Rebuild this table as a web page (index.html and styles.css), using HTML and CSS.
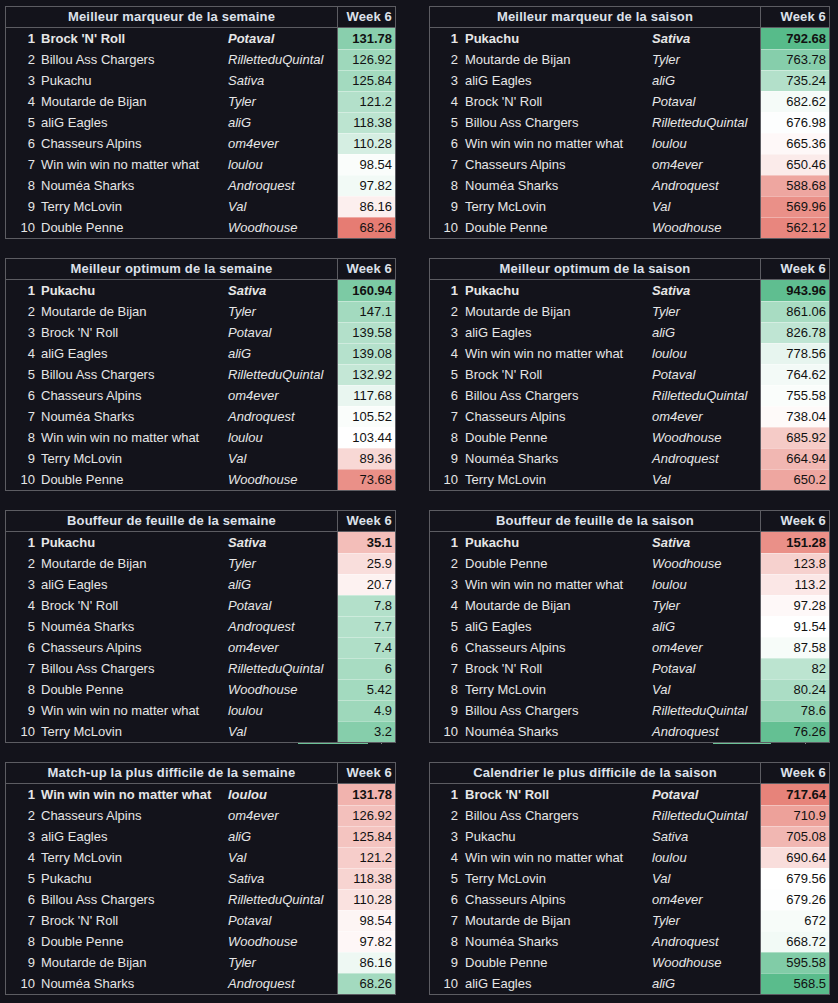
FILE: index.html
```html
<!DOCTYPE html>
<html lang="fr">
<head>
<meta charset="utf-8">
<title>Classements Week 6</title>
<link rel="stylesheet" href="styles.css">
</head>
<body>
<div class="board">

<!-- Row 1 -->
<div class="t">
  <div class="hd"><div class="ttl">Meilleur marqueur de la semaine</div><div class="wk">Week 6</div></div>
  <div class="row r1"><div class="rk">1</div><div class="nm">Brock 'N' Roll</div><div class="ow">Potaval</div><div class="v g" style="--p:70%">131.78</div></div>
  <div class="row"><div class="rk">2</div><div class="nm">Billou Ass Chargers</div><div class="ow">RilletteduQuintal</div><div class="v g" style="--p:58%">126.92</div></div>
  <div class="row"><div class="rk">3</div><div class="nm">Pukachu</div><div class="ow">Sativa</div><div class="v g" style="--p:55%">125.84</div></div>
  <div class="row"><div class="rk">4</div><div class="nm">Moutarde de Bijan</div><div class="ow">Tyler</div><div class="v g" style="--p:45%">121.2</div></div>
  <div class="row"><div class="rk">5</div><div class="nm">aliG Eagles</div><div class="ow">aliG</div><div class="v g" style="--p:40%">118.38</div></div>
  <div class="row"><div class="rk">6</div><div class="nm">Chasseurs Alpins</div><div class="ow">om4ever</div><div class="v g" style="--p:25%">110.28</div></div>
  <div class="row"><div class="rk">7</div><div class="nm">Win win win no matter what</div><div class="ow">loulou</div><div class="v g" style="--p:3%">98.54</div></div>
  <div class="row"><div class="rk">8</div><div class="nm">Nouméa Sharks</div><div class="ow">Androquest</div><div class="v g" style="--p:8%">97.82</div></div>
  <div class="row"><div class="rk">9</div><div class="nm">Terry McLovin</div><div class="ow">Val</div><div class="v r" style="--p:12%">86.16</div></div>
  <div class="row"><div class="rk">10</div><div class="nm">Double Penne</div><div class="ow">Woodhouse</div><div class="v r" style="--p:100%">68.26</div></div>
</div>

<div class="t wide">
  <div class="hd"><div class="ttl">Meilleur marqueur de la saison</div><div class="wk">Week 6</div></div>
  <div class="row r1"><div class="rk">1</div><div class="nm">Pukachu</div><div class="ow">Sativa</div><div class="v g" style="--p:100%">792.68</div></div>
  <div class="row"><div class="rk">2</div><div class="nm">Moutarde de Bijan</div><div class="ow">Tyler</div><div class="v g" style="--p:72%">763.78</div></div>
  <div class="row"><div class="rk">3</div><div class="nm">aliG Eagles</div><div class="ow">aliG</div><div class="v g" style="--p:45%">735.24</div></div>
  <div class="row"><div class="rk">4</div><div class="nm">Brock 'N' Roll</div><div class="ow">Potaval</div><div class="v g" style="--p:6%">682.62</div></div>
  <div class="row"><div class="rk">5</div><div class="nm">Billou Ass Chargers</div><div class="ow">RilletteduQuintal</div><div class="v g" style="--p:1%">676.98</div></div>
  <div class="row"><div class="rk">6</div><div class="nm">Win win win no matter what</div><div class="ow">loulou</div><div class="v r" style="--p:5%">665.36</div></div>
  <div class="row"><div class="rk">7</div><div class="nm">Chasseurs Alpins</div><div class="ow">om4ever</div><div class="v r" style="--p:15%">650.46</div></div>
  <div class="row"><div class="rk">8</div><div class="nm">Nouméa Sharks</div><div class="ow">Androquest</div><div class="v r" style="--p:68%">588.68</div></div>
  <div class="row"><div class="rk">9</div><div class="nm">Terry McLovin</div><div class="ow">Val</div><div class="v r" style="--p:85%">569.96</div></div>
  <div class="row"><div class="rk">10</div><div class="nm">Double Penne</div><div class="ow">Woodhouse</div><div class="v r" style="--p:92%">562.12</div></div>
</div>

<!-- Row 2 -->
<div class="t">
  <div class="hd"><div class="ttl">Meilleur optimum de la semaine</div><div class="wk">Week 6</div></div>
  <div class="row r1"><div class="rk">1</div><div class="nm">Pukachu</div><div class="ow">Sativa</div><div class="v g" style="--p:78%">160.94</div></div>
  <div class="row"><div class="rk">2</div><div class="nm">Moutarde de Bijan</div><div class="ow">Tyler</div><div class="v g" style="--p:55%">147.1</div></div>
  <div class="row"><div class="rk">3</div><div class="nm">Brock 'N' Roll</div><div class="ow">Potaval</div><div class="v g" style="--p:45%">139.58</div></div>
  <div class="row"><div class="rk">4</div><div class="nm">aliG Eagles</div><div class="ow">aliG</div><div class="v g" style="--p:44%">139.08</div></div>
  <div class="row"><div class="rk">5</div><div class="nm">Billou Ass Chargers</div><div class="ow">RilletteduQuintal</div><div class="v g" style="--p:35%">132.92</div></div>
  <div class="row"><div class="rk">6</div><div class="nm">Chasseurs Alpins</div><div class="ow">om4ever</div><div class="v g" style="--p:13%">117.68</div></div>
  <div class="row"><div class="rk">7</div><div class="nm">Nouméa Sharks</div><div class="ow">Androquest</div><div class="v g" style="--p:3%">105.52</div></div>
  <div class="row"><div class="rk">8</div><div class="nm">Win win win no matter what</div><div class="ow">loulou</div><div class="v g" style="--p:0%">103.44</div></div>
  <div class="row"><div class="rk">9</div><div class="nm">Terry McLovin</div><div class="ow">Val</div><div class="v r" style="--p:30%">89.36</div></div>
  <div class="row"><div class="rk">10</div><div class="nm">Double Penne</div><div class="ow">Woodhouse</div><div class="v r" style="--p:85%">73.68</div></div>
</div>

<div class="t wide">
  <div class="hd"><div class="ttl">Meilleur optimum de la saison</div><div class="wk">Week 6</div></div>
  <div class="row r1"><div class="rk">1</div><div class="nm">Pukachu</div><div class="ow">Sativa</div><div class="v g" style="--p:95%">943.96</div></div>
  <div class="row"><div class="rk">2</div><div class="nm">Moutarde de Bijan</div><div class="ow">Tyler</div><div class="v g" style="--p:52%">861.06</div></div>
  <div class="row"><div class="rk">3</div><div class="nm">aliG Eagles</div><div class="ow">aliG</div><div class="v g" style="--p:38%">826.78</div></div>
  <div class="row"><div class="rk">4</div><div class="nm">Win win win no matter what</div><div class="ow">loulou</div><div class="v g" style="--p:14%">778.56</div></div>
  <div class="row"><div class="rk">5</div><div class="nm">Brock 'N' Roll</div><div class="ow">Potaval</div><div class="v g" style="--p:7%">764.62</div></div>
  <div class="row"><div class="rk">6</div><div class="nm">Billou Ass Chargers</div><div class="ow">RilletteduQuintal</div><div class="v g" style="--p:3%">755.58</div></div>
  <div class="row"><div class="rk">7</div><div class="nm">Chasseurs Alpins</div><div class="ow">om4ever</div><div class="v r" style="--p:4%">738.04</div></div>
  <div class="row"><div class="rk">8</div><div class="nm">Double Penne</div><div class="ow">Woodhouse</div><div class="v r" style="--p:40%">685.92</div></div>
  <div class="row"><div class="rk">9</div><div class="nm">Nouméa Sharks</div><div class="ow">Androquest</div><div class="v r" style="--p:55%">664.94</div></div>
  <div class="row"><div class="rk">10</div><div class="nm">Terry McLovin</div><div class="ow">Val</div><div class="v r" style="--p:68%">650.2</div></div>
</div>

<!-- Row 3 -->
<div class="t">
  <div class="hd"><div class="ttl">Bouffeur de feuille de la semaine</div><div class="wk">Week 6</div></div>
  <div class="row r1"><div class="rk">1</div><div class="nm">Pukachu</div><div class="ow">Sativa</div><div class="v r" style="--p:50%">35.1</div></div>
  <div class="row"><div class="rk">2</div><div class="nm">Moutarde de Bijan</div><div class="ow">Tyler</div><div class="v r" style="--p:25%">25.9</div></div>
  <div class="row"><div class="rk">3</div><div class="nm">aliG Eagles</div><div class="ow">aliG</div><div class="v r" style="--p:10%">20.7</div></div>
  <div class="row"><div class="rk">4</div><div class="nm">Brock 'N' Roll</div><div class="ow">Potaval</div><div class="v g" style="--p:45%">7.8</div></div>
  <div class="row"><div class="rk">5</div><div class="nm">Nouméa Sharks</div><div class="ow">Androquest</div><div class="v g" style="--p:45%">7.7</div></div>
  <div class="row"><div class="rk">6</div><div class="nm">Chasseurs Alpins</div><div class="ow">om4ever</div><div class="v g" style="--p:47%">7.4</div></div>
  <div class="row"><div class="rk">7</div><div class="nm">Billou Ass Chargers</div><div class="ow">RilletteduQuintal</div><div class="v g" style="--p:52%">6</div></div>
  <div class="row"><div class="rk">8</div><div class="nm">Double Penne</div><div class="ow">Woodhouse</div><div class="v g" style="--p:55%">5.42</div></div>
  <div class="row"><div class="rk">9</div><div class="nm">Win win win no matter what</div><div class="ow">loulou</div><div class="v g" style="--p:58%">4.9</div></div>
  <div class="row"><div class="rk">10</div><div class="nm">Terry McLovin</div><div class="ow">Val</div><div class="v g" style="--p:72%">3.2</div></div>
  <div class="trace"><span class="tline"></span><span class="tdot"></span></div>
</div>

<div class="t wide">
  <div class="hd"><div class="ttl">Bouffeur de feuille de la saison</div><div class="wk">Week 6</div></div>
  <div class="row r1"><div class="rk">1</div><div class="nm">Pukachu</div><div class="ow">Sativa</div><div class="v r" style="--p:85%">151.28</div></div>
  <div class="row"><div class="rk">2</div><div class="nm">Double Penne</div><div class="ow">Woodhouse</div><div class="v r" style="--p:35%">123.8</div></div>
  <div class="row"><div class="rk">3</div><div class="nm">Win win win no matter what</div><div class="ow">loulou</div><div class="v r" style="--p:18%">113.2</div></div>
  <div class="row"><div class="rk">4</div><div class="nm">Moutarde de Bijan</div><div class="ow">Tyler</div><div class="v r" style="--p:5%">97.28</div></div>
  <div class="row"><div class="rk">5</div><div class="nm">aliG Eagles</div><div class="ow">aliG</div><div class="v g" style="--p:0%">91.54</div></div>
  <div class="row"><div class="rk">6</div><div class="nm">Chasseurs Alpins</div><div class="ow">om4ever</div><div class="v g" style="--p:5%">87.58</div></div>
  <div class="row"><div class="rk">7</div><div class="nm">Brock 'N' Roll</div><div class="ow">Potaval</div><div class="v g" style="--p:40%">82</div></div>
  <div class="row"><div class="rk">8</div><div class="nm">Terry McLovin</div><div class="ow">Val</div><div class="v g" style="--p:50%">80.24</div></div>
  <div class="row"><div class="rk">9</div><div class="nm">Billou Ass Chargers</div><div class="ow">RilletteduQuintal</div><div class="v g" style="--p:65%">78.6</div></div>
  <div class="row"><div class="rk">10</div><div class="nm">Nouméa Sharks</div><div class="ow">Androquest</div><div class="v g" style="--p:92%">76.26</div></div>
  <div class="trace"><span class="tline"></span><span class="tdot"></span></div>
</div>

<!-- Row 4 -->
<div class="t">
  <div class="hd"><div class="ttl">Match-up la plus difficile de la semaine</div><div class="wk">Week 6</div></div>
  <div class="row r1"><div class="rk">1</div><div class="nm">Win win win no matter what</div><div class="ow">loulou</div><div class="v r" style="--p:58%">131.78</div></div>
  <div class="row"><div class="rk">2</div><div class="nm">Chasseurs Alpins</div><div class="ow">om4ever</div><div class="v r" style="--p:48%">126.92</div></div>
  <div class="row"><div class="rk">3</div><div class="nm">aliG Eagles</div><div class="ow">aliG</div><div class="v r" style="--p:45%">125.84</div></div>
  <div class="row"><div class="rk">4</div><div class="nm">Terry McLovin</div><div class="ow">Val</div><div class="v r" style="--p:38%">121.2</div></div>
  <div class="row"><div class="rk">5</div><div class="nm">Pukachu</div><div class="ow">Sativa</div><div class="v r" style="--p:33%">118.38</div></div>
  <div class="row"><div class="rk">6</div><div class="nm">Billou Ass Chargers</div><div class="ow">RilletteduQuintal</div><div class="v r" style="--p:22%">110.28</div></div>
  <div class="row"><div class="rk">7</div><div class="nm">Brock 'N' Roll</div><div class="ow">Potaval</div><div class="v r" style="--p:8%">98.54</div></div>
  <div class="row"><div class="rk">8</div><div class="nm">Double Penne</div><div class="ow">Woodhouse</div><div class="v r" style="--p:6%">97.82</div></div>
  <div class="row"><div class="rk">9</div><div class="nm">Moutarde de Bijan</div><div class="ow">Tyler</div><div class="v g" style="--p:10%">86.16</div></div>
  <div class="row"><div class="rk">10</div><div class="nm">Nouméa Sharks</div><div class="ow">Androquest</div><div class="v g" style="--p:55%">68.26</div></div>
</div>

<div class="t wide">
  <div class="hd"><div class="ttl">Calendrier le plus difficile de la saison</div><div class="wk">Week 6</div></div>
  <div class="row r1"><div class="rk">1</div><div class="nm">Brock 'N' Roll</div><div class="ow">Potaval</div><div class="v r" style="--p:95%">717.64</div></div>
  <div class="row"><div class="rk">2</div><div class="nm">Billou Ass Chargers</div><div class="ow">RilletteduQuintal</div><div class="v r" style="--p:72%">710.9</div></div>
  <div class="row"><div class="rk">3</div><div class="nm">Pukachu</div><div class="ow">Sativa</div><div class="v r" style="--p:55%">705.08</div></div>
  <div class="row"><div class="rk">4</div><div class="nm">Win win win no matter what</div><div class="ow">loulou</div><div class="v r" style="--p:25%">690.64</div></div>
  <div class="row"><div class="rk">5</div><div class="nm">Terry McLovin</div><div class="ow">Val</div><div class="v g" style="--p:0%">679.56</div></div>
  <div class="row"><div class="rk">6</div><div class="nm">Chasseurs Alpins</div><div class="ow">om4ever</div><div class="v g" style="--p:1%">679.26</div></div>
  <div class="row"><div class="rk">7</div><div class="nm">Moutarde de Bijan</div><div class="ow">Tyler</div><div class="v g" style="--p:5%">672</div></div>
  <div class="row"><div class="rk">8</div><div class="nm">Nouméa Sharks</div><div class="ow">Androquest</div><div class="v g" style="--p:8%">668.72</div></div>
  <div class="row"><div class="rk">9</div><div class="nm">Double Penne</div><div class="ow">Woodhouse</div><div class="v g" style="--p:75%">595.58</div></div>
  <div class="row"><div class="rk">10</div><div class="nm">aliG Eagles</div><div class="ow">aliG</div><div class="v g" style="--p:98%">568.5</div></div>
</div>

</div>
</body>
</html>
```

FILE: styles.css
```css
html, body {
  margin: 0;
  padding: 0;
  background: #13131b;
}

body {
  font-family: "Liberation Sans", Arial, sans-serif;
  font-size: 13px;
  color: #e6e6e6;
}

.board {
  display: grid;
  grid-template-columns: 391px 401px;
  column-gap: 33px;
  row-gap: 19px;
  padding: 6px 0 0 5px;
}

.t {
  position: relative;
  border: 1px solid #5c5c62;
  box-sizing: border-box;
  width: 391px;
  --wk: 58px;
  --rk: 31px;
  --nm: 187px;
}

.t.wide {
  width: 401px;
  --wk: 69px;
}

.hd {
  display: grid;
  grid-template-columns: 1fr var(--wk);
  height: 20px;
  line-height: 20px;
  border-bottom: 1px solid #5c5c62;
  font-weight: bold;
  color: #dde1ea;
}

.ttl {
  text-align: center;
  letter-spacing: 0.18px;
}

.wk {
  border-left: 1px solid #5c5c62;
  text-align: right;
  padding-right: 3px;
  letter-spacing: 0.15px;
}

.row {
  display: grid;
  grid-template-columns: var(--rk) var(--nm) 1fr var(--wk);
  height: 21px;
  line-height: 21px;
  white-space: nowrap;
}

.rk {
  text-align: right;
  padding-right: 2px;
}

.t.wide .rk {
  padding-right: 3px;
}

.nm {
  padding-left: 4px;
  overflow: hidden;
}

.ow {
  padding-left: 4px;
  font-style: italic;
  overflow: hidden;
}

.v {
  border-left: 1px solid #5c5c62;
  text-align: right;
  padding-right: 3px;
  color: #111;
}

.row + .row .v {
  box-shadow: inset 0 1px 0 rgba(255, 255, 255, 0.35);
}

.g {
  background: color-mix(in srgb, #57bb8a var(--p), #ffffff);
}

.r {
  background: color-mix(in srgb, #e67c73 var(--p), #ffffff);
}

.r1 {
  font-weight: bold;
}

.trace {
  position: absolute;
  left: 0;
  top: 100%;
  margin-top: 1px;
  width: 100%;
  height: 1px;
}

.tline {
  position: absolute;
  left: 292px;
  width: 70px;
  height: 1px;
  background: #6cc398;
}

.tdot {
  position: absolute;
  left: 375px;
  width: 1px;
  height: 1px;
  background: #8a8a8a;
}

.t.wide .tline {
  left: 283px;
  width: 58px;
}

.t.wide .tdot {
  left: 375px;
}
```
